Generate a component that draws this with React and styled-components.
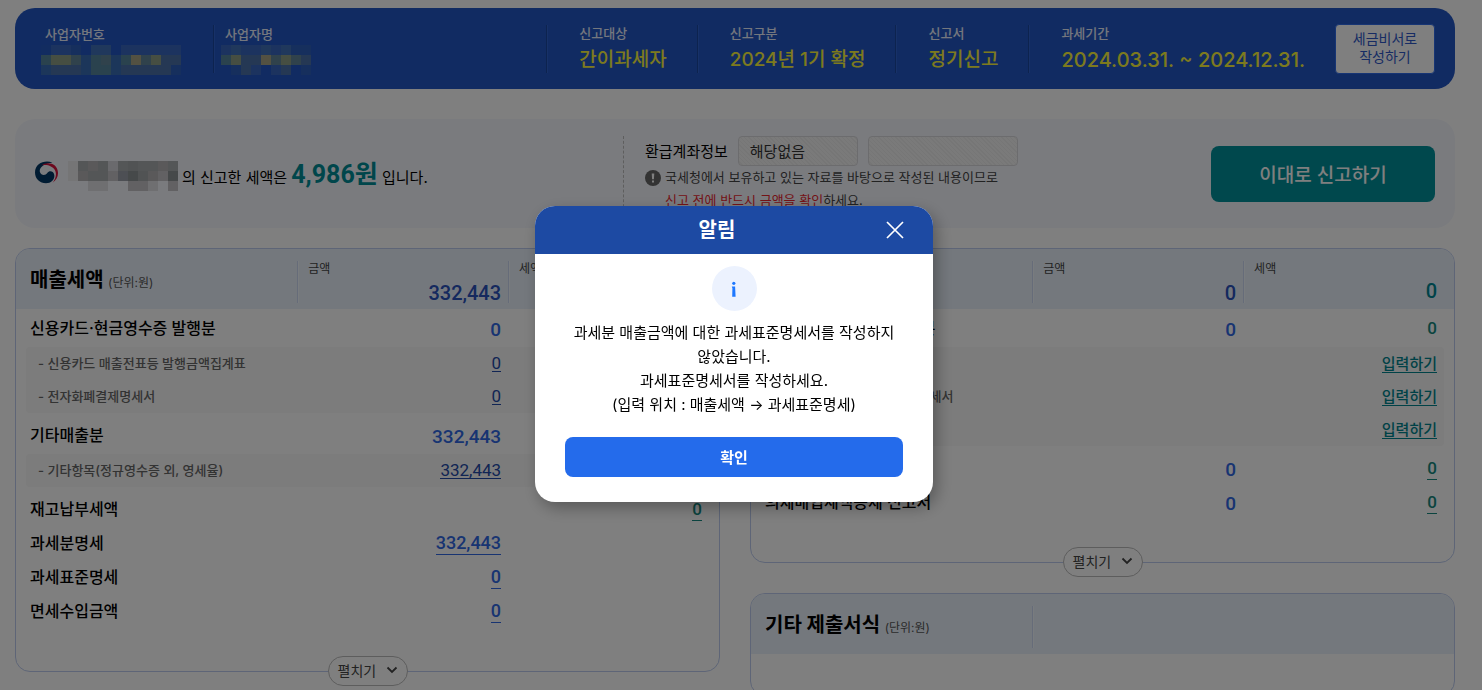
import React, { useState } from "react";
import styled, { createGlobalStyle, css } from "styled-components";

const GlobalStyle = createGlobalStyle`
  * {
    box-sizing: border-box;
  }
  body {
    margin: 0;
    overflow: hidden;
    background: #ffffff;
    color: #000000;
    font-family: Inter, "Noto Sans CJK KR", sans-serif;
    font-size: 16px;
    word-break: keep-all;
  }
  button,
  input {
    font-family: inherit;
  }
  h2, h3, p, dl, dd {
    margin: 0;
  }
`;

const figureFont = css`
  font-family: Roboto, "Noto Sans CJK KR", sans-serif;
`;

const Page = styled.main`
  padding: 8px 27px 0 15px;
`;

/* top summary bar */

const TopBar = styled.header`
  display: flex;
  align-items: center;
  height: 81px;
  padding: 0 20px 0 0;
  border-radius: 20px;
  background: #2256c4;
`;

const SummaryList = styled.dl`
  display: flex;
  flex: ${({ $grow }) => ($grow ? 1 : "none")};
`;

const SummaryItem = styled.div`
  padding: 0 30px 0 32px;
  height: 48px;
  border-left: 1px solid #1a469f;
  box-shadow: inset 1px 0 0 #2f63d0;

  dt {
    color: #e9eefc;
    font-size: 13px;
    font-weight: 500;
    line-height: 16px;
  }
  dd {
    color: #fbf53c;
    font-size: ${({ $period }) => ($period ? 20 : 19)}px;
    font-weight: 500;
    line-height: 38px;
    white-space: nowrap;
  }
`;

const OwnerItem = styled(SummaryItem)`
  padding: 0 32px 0 11px;

  dt {
    line-height: 18px;
  }
  dd {
    line-height: 0;
    margin: 2px 0 0 -4px;
  }

  &:first-child {
    border: none;
    box-shadow: none;
    padding-left: 30px;
  }
`;

const AssistantButton = styled.button`
  width: 100px;
  height: 50px;
  padding: 0 0 2px;
  border: 1px solid #2f6be8;
  border-radius: 4px;
  background: #ffffff;
  color: #2f59c8;
  font-size: 14px;
  line-height: 18px;
  cursor: pointer;
`;

/* refund summary */

const RefundBox = styled.section`
  display: grid;
  grid-template-columns: 42% 1fr auto;
  align-items: center;
  height: 109px;
  margin-top: 30px;
  padding: 0 20px;
  border-radius: 20px;
  background: #f5f7fd;
`;

const RefundText = styled.p`
  display: flex;
  align-items: flex-start;
  gap: 4px;
  padding-top: 6px;
  font-size: 15px;
  line-height: 28px;

  > svg {
    flex: none;
  }
  > svg:first-child {
    margin-right: 6px;
  }
  strong {
    ${figureFont}
    color: #008c96;
    font-size: 25px;
    font-weight: 700;
  }
`;

const AccountBox = styled.div`
  height: 76px;
  padding-left: 21px;
  border-left: 1px dashed #bdbdbd;
`;

const AccountRow = styled.div`
  display: flex;
  align-items: center;
  gap: 10px;

  label {
    font-size: 15px;
  }
`;

const AccountInput = styled.input`
  width: ${({ $wide }) => ($wide ? 150 : 120)}px;
  height: 30px;
  padding: 0 11px;
  border: 1px solid #d9d9dc;
  border-radius: 4px;
  background: repeating-linear-gradient(45deg, #f4f4f4 0 2px, #ececec 2px 3px);
  color: #333333;
  font-size: 15px;
`;

const Notice = styled.p`
  display: flex;
  gap: 4px;
  color: #444444;
  font-size: 13px;
  line-height: 23px;

  svg {
    flex: none;
    margin-top: 4px;
  }
  em {
    color: #e8262f;
    font-style: normal;
  }
`;

const SubmitButton = styled.button`
  width: 224px;
  height: 56px;
  border: none;
  border-radius: 8px;
  background: #00909a;
  color: #ffffff;
  font-size: 19px;
  font-weight: 500;
  cursor: pointer;
`;

/* panels */

const Columns = styled.div`
  display: grid;
  grid-template-columns: 1fr 1fr;
  align-items: start;
  gap: 30px;
  margin-top: 20px;
`;

const Stack = styled.div`
  display: grid;
  gap: 30px;
`;

const PanelBox = styled.section`
  position: relative;
  padding-bottom: 41px;
  border: 1px solid #bccbee;
  border-radius: 15px;
`;

const Table = styled.table`
  display: block;

  thead,
  tbody {
    display: block;
  }
  tr {
    display: grid;
    grid-template-columns: 4fr 3fr 3fr;
  }
  th,
  td {
    padding: 0;
    font-weight: inherit;
    text-align: left;
  }
`;

const Head = styled.thead`
  height: 60px;
  border-radius: 14px 14px 0 0;
  background: #e9f1fb;
`;

const TitleCell = styled.th`
  && {
    padding-left: 14px;
  }
  line-height: 62px;

  h2 {
    display: inline;
    font-size: 20px;
    font-weight: 700;
  }
  small {
    color: #555555;
    font-size: 12px;
  }
`;

const TotalCell = styled.th`
  && {
    padding: 0 ${({ $tax }) => ($tax ? 17 : 7)}px 0 10px;
  }
  display: flex;
  flex-direction: column;
  height: 42px;
  margin-top: 12px;
  border-left: 1px solid #ccd8f3;
  box-shadow: inset 1px 0 0 #f3f8ff;

  span {
    color: #444444;
    font-size: 12px;
    line-height: 16px;
  }
  strong {
    ${figureFont}
    align-self: flex-end;
    margin-top: ${({ $tax }) => ($tax ? 3 : 5)}px;
    color: ${({ $tax }) => ($tax ? "#008692" : "#2a52bd")};
    font-size: 20px;
    font-weight: 500;
    line-height: 22px;
  }
`;

const MainGroup = styled.tbody`
  padding-top: ${({ $first }) => ($first ? 2 : 5)}px;
  padding-bottom: 2px;

  tr {
    height: 34px;
    line-height: 34px;
    font-weight: 500;
  }
  th {
    padding-left: 14px;
  }
`;

const SubGroup = styled.tbody`
  margin: 0 10px;
  border-radius: 4px;
  background: #f8f8f8;

  tr {
    height: 33px;
    line-height: 33px;
    margin: 0 -10px;
    font-weight: 500;
  }
  th {
    padding-left: 22px;
    color: #666666;
    font-size: 13px;
  }
`;

const ValueCell = styled.td`
  && {
    text-align: right;
    padding-right: ${({ $tax }) => ($tax ? 17 : 7)}px;
  }
`;

const valueText = css`
  ${figureFont}
  display: inline-block;
  color: ${({ $tax }) => ($tax ? "#16897f" : "#3069e4")};
  font-size: ${({ $tax }) => ($tax ? 17 : 19)}px;
  font-weight: 500;
  line-height: 22px;
`;

const Value = styled.span`
  ${valueText}
  vertical-align: ${({ $tax }) => ($tax ? "baseline" : "-2px")};
`;

const ValueLink = styled.a`
  ${valueText}
  border-bottom: 1px solid;
  font-size: ${({ $tax }) => ($tax ? 17 : 18)}px;
  text-decoration: none;

  ${SubGroup} & {
    color: ${({ $tax }) => ($tax ? "#00848e" : "#234aa8")};
    font-size: ${({ $tax }) => ($tax ? 15 : 17)}px;
    font-weight: ${({ $tax }) => ($tax ? 500 : 400)};
    line-height: 16px;
  }
`;

const ExpandButton = styled.button`
  position: absolute;
  left: 50%;
  bottom: -15px;
  transform: translateX(-50%);
  display: flex;
  align-items: center;
  justify-content: space-between;
  width: 80px;
  height: 30px;
  padding: 0 9px 2px;
  border: 1px solid #bbbbbb;
  border-radius: 15px;
  background: #ffffff;
  color: #444444;
  font-size: 14px;
  white-space: nowrap;
  cursor: pointer;
`;

/* alert */

const Overlay = styled.div`
  position: fixed;
  inset: 0;
  display: flex;
  align-items: center;
  justify-content: center;
  padding: 18px 14px 0 0;
  background: rgba(0, 0, 0, 0.5);
`;

const Dialog = styled.div`
  width: 398px;
  overflow: hidden;
  border-radius: 20px;
  background: #ffffff;
  box-shadow: 4px 6px 16px rgba(0, 0, 0, 0.3);
`;

const DialogHead = styled.div`
  display: flex;
  align-items: center;
  height: 48px;
  padding: 0 24px 0 18px;
  background: #1d4aa3;
  color: #ffffff;

  h3 {
    flex: 1;
    font-size: 20px;
    font-weight: 700;
    line-height: 28px;
    text-align: center;
  }
`;

const CloseButton = styled.button`
  display: flex;
  align-items: center;
  justify-content: center;
  width: 28px;
  height: 28px;
  padding: 0;
  border: none;
  background: none;
  color: inherit;
  cursor: pointer;
`;

const DialogBody = styled.div`
  display: flex;
  flex-direction: column;
  align-items: center;
  padding: 12px 30px 25px;

  p {
    margin: 10px 0 20px;
    font-size: 15px;
    line-height: 24px;
    text-align: center;
  }
`;

const ConfirmButton = styled.button`
  width: 100%;
  height: 40px;
  padding: 0 0 2px;
  border: none;
  border-radius: 8px;
  background: #246beb;
  color: #ffffff;
  font-size: 15px;
  font-weight: 700;
  cursor: pointer;
`;

/* masked values: one letter per 10px block, "." is empty */

const BLUE_TONES = {
  a: "#2458c0",
  d: "#3866be",
  e: "#4070b8",
  f: "#386cb4",
  g: "#54849c",
  h: "#608498",
  i: "#8c9c84",
  j: "#a6a284",
  k: "#4a70a8",
  l: "#2c5eba",
};

const GRAY_TONES = {
  a: "#eaeaec",
  b: "#a9acae",
  c: "#b4b2b4",
  d: "#d4d4da",
  e: "#8c9294",
  f: "#a2a6a8",
  g: "#c4c2c6",
  h: "#9a9ea8",
  i: "#dedee2",
};

const Mask = ({ rows, tones }) => (
  <svg
    width={rows[0].length * 10}
    height={rows.length * 10}
    shapeRendering="crispEdges"
    aria-hidden="true"
  >
    {rows.map((row, y) =>
      row.split("").map((tone, x) =>
        tone === "." ? null : (
          <rect
            key={`${x}-${y}`}
            x={x * 10}
            y={y * 10}
            width="10"
            height="10"
            fill={tones[tone]}
          />
        )
      )
    )}
  </svg>
);

const Emblem = () => (
  <svg width="23" height="23" viewBox="0 0 23 23" aria-hidden="true">
    <path
      fill="#003764"
      d="M17.5 1.7C10.5-1.6 0 2 0 11.5 0 18 5 22.2 11 22.2c5.600 0 9.200-4.400 8.200-8.700C18.300 9.800 14 9.400 12.300 12 10.500 14.800 6 14.600 4.900 11 3.800 6.600 9 2.400 17.500 1.700Z"
    />
    <path
      fill="#d8123c"
      d="M6.500 4.300C12 .2 23 2.200 23 12c0 4-2 7.500-5.500 9.700 3.500-4.200 4.300-8.800 2.500-12.500C17.800 5 12 3 6.500 4.300Z"
    />
  </svg>
);

const NoticeIcon = () => (
  <svg width="16" height="16" viewBox="0 0 16 16" aria-hidden="true">
    <circle cx="8" cy="8" r="8" fill="#666666" />
    <path fill="#ffffff" d="M6.700 3.500h2.600L8.900 9.300H7.100ZM7 10.500h2v2H7z" />
  </svg>
);

const InfoIcon = () => (
  <svg width="45" height="45" viewBox="0 0 45 45" aria-hidden="true">
    <circle cx="22.5" cy="22.5" r="22.5" fill="#ecf2fe" />
    <circle cx="21.800" cy="17.300" r="1.6" fill="#1e78ff" />
    <path fill="#1e78ff" d="M19.800 20.500h3.300l.5 10.200h-3.400l.2-8.400z" />
  </svg>
);

const CloseIcon = () => (
  <svg width="18" height="18" viewBox="0 0 18 18" aria-hidden="true">
    <path
      d="M1 1l16 16M17 1L1 17"
      fill="none"
      stroke="currentColor"
      strokeWidth="1.7"
    />
  </svg>
);

const ChevronIcon = () => (
  <svg width="12" height="8" viewBox="0 0 12 8" aria-hidden="true">
    <path
      d="M1.500 1.500L6 6l4.500-4.500"
      fill="none"
      stroke="#444444"
      strokeWidth="1.8"
    />
  </svg>
);

const summary = [
  { label: "신고대상", value: "간이과세자" },
  { label: "신고구분", value: "2024년 1기 확정" },
  { label: "신고서", value: "정기신고" },
  { label: "과세기간", value: "2024.03.31. ~ 2024.12.31.", period: true },
];

const salesGroups = [
  {
    rows: [{ name: "신용카드·현금영수증 발행분", amount: "0" }],
  },
  {
    sub: true,
    rows: [
      { name: "신용카드 매출전표등 발행금액집계표", amount: "0", link: true },
      { name: "전자화폐결제명세서", amount: "0", link: true },
    ],
  },
  { rows: [{ name: "기타매출분", amount: "332,443" }] },
  {
    sub: true,
    rows: [
      { name: "기타항목(정규영수증 외, 영세율)", amount: "332,443", link: true },
    ],
  },
  {
    rows: [
      { name: "재고납부세액", tax: "0", taxLink: true },
      { name: "과세분명세", amount: "332,443", link: true },
      { name: "과세표준명세", amount: "0", link: true },
      { name: "면세수입금액", amount: "0", link: true },
    ],
  },
];

const purchaseGroups = [
  { rows: [{ name: "신용카드 매출전표 수취분", amount: "0", tax: "0" }] },
  {
    sub: true,
    rows: [
      { name: "매입세금계산서", tax: "입력하기", taxLink: true },
      { name: "신용카드매출전표등 수령명세서", tax: "입력하기", taxLink: true },
      { name: "매입계산서", tax: "입력하기", taxLink: true },
    ],
  },
  {
    rows: [
      { name: "기타공제세액", amount: "0", tax: "0", taxLink: true },
      { name: "의제매입세액공제 신고서", amount: "0", tax: "0", taxLink: true },
    ],
  },
];

const Figure = ({ value, link, tax }) => {
  if (!value) return null;
  return link ? (
    <ValueLink href="#" $tax={tax}>
      {value}
    </ValueLink>
  ) : (
    <Value $tax={tax}>{value}</Value>
  );
};

const Panel = ({ title, amount, tax, groups }) => (
  <PanelBox>
    <Table>
      <Head>
        <tr>
          <TitleCell scope="col">
            <h2>{title}</h2> <small>(단위:원)</small>
          </TitleCell>
          <TotalCell scope="col">
            {amount && <span>금액</span>}
            <strong>{amount}</strong>
          </TotalCell>
          {tax && (
            <TotalCell scope="col" $tax>
              <span>세액</span>
              <strong>{tax}</strong>
            </TotalCell>
          )}
        </tr>
      </Head>
      {groups.map((group, i) => {
        const Group = group.sub ? SubGroup : MainGroup;
        return (
          <Group key={i} $first={i === 0}>
            {group.rows.map((row) => (
              <tr key={row.name}>
                <th scope="row">
                  {group.sub && "- "}
                  {row.name}
                </th>
                <ValueCell>
                  <Figure value={row.amount} link={row.link} />
                </ValueCell>
                <ValueCell $tax>
                  <Figure value={row.tax} link={row.taxLink} tax />
                </ValueCell>
              </tr>
            ))}
          </Group>
        );
      })}
    </Table>
    {groups.length > 0 && (
      <ExpandButton type="button">
        펼치기
        <ChevronIcon />
      </ExpandButton>
    )}
  </PanelBox>
);

const App = () => {
  const [open, setOpen] = useState(true);

  return (
    <>
      <GlobalStyle />
      <Page>
        <TopBar>
          <SummaryList $grow>
            <OwnerItem>
              <dt>사업자번호</dt>
              <dd>
                <Mask
                  tones={BLUE_TONES}
                  rows={["addl.ee.dddddd", "giihfghfgjhikk", "fkkkfggfkkkkkl"]}
                />
              </dd>
            </OwnerItem>
            <OwnerItem>
              <dt>사업자명</dt>
              <dd>
                <Mask
                  tones={BLUE_TONES}
                  rows={["deddedell", "gikkjhihk", ".lkd.dk.l"]}
                />
              </dd>
            </OwnerItem>
          </SummaryList>
          <SummaryList>
            {summary.map((item) => (
              <SummaryItem key={item.label} $period={item.period}>
                <dt>{item.label}</dt>
                <dd>{item.value}</dd>
              </SummaryItem>
            ))}
          </SummaryList>
          <AssistantButton type="button">
            세금비서로
            <br />
            작성하기
          </AssistantButton>
        </TopBar>

        <RefundBox>
          <RefundText>
            <Emblem />
            <Mask
              tones={GRAY_TONES}
              rows={["abcbdbfbbcb", "acbbghefcge", "..ii..ggi.g"]}
            />
            <span>
              의 신고한 세액은 <strong>4,986원</strong> 입니다.
            </span>
          </RefundText>
          <AccountBox>
            <AccountRow>
              <label htmlFor="bank">환급계좌정보</label>
              <AccountInput id="bank" defaultValue="해당없음" readOnly />
              <AccountInput $wide aria-label="계좌번호" readOnly />
            </AccountRow>
            <Notice>
              <NoticeIcon />
              <span>
                국세청에서 보유하고 있는 자료를 바탕으로 작성된 내용이므로
                <br />
                <em>신고 전에 반드시 금액을 확인</em>하세요.
              </span>
            </Notice>
          </AccountBox>
          <SubmitButton type="button">이대로 신고하기</SubmitButton>
        </RefundBox>

        <Columns>
          <Panel
            title="매출세액"
            amount="332,443"
            tax="4,986"
            groups={salesGroups}
          />
          <Stack>
            <Panel
              title="매입세액"
              amount="0"
              tax="0"
              groups={purchaseGroups}
            />
            <Panel title="기타 제출서식" groups={[]} />
          </Stack>
        </Columns>
      </Page>

      {open && (
        <Overlay>
          <Dialog role="alertdialog" aria-modal="true" aria-labelledby="alert">
            <DialogHead>
              <h3 id="alert">알림</h3>
              <CloseButton
                type="button"
                aria-label="닫기"
                onClick={() => setOpen(false)}
              >
                <CloseIcon />
              </CloseButton>
            </DialogHead>
            <DialogBody>
              <InfoIcon />
              <p>
                과세분 매출금액에 대한 과세표준명세서를 작성하지 않았습니다.
                <br />
                과세표준명세서를 작성하세요.
                <br />
                (입력 위치 : 매출세액 → 과세표준명세)
              </p>
              <ConfirmButton type="button" onClick={() => setOpen(false)}>
                확인
              </ConfirmButton>
            </DialogBody>
          </Dialog>
        </Overlay>
      )}
    </>
  );
};

export default App;
